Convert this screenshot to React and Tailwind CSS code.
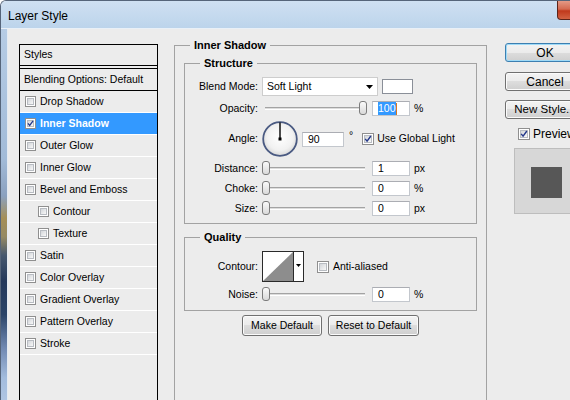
import React from "react";

function Checkbox({ checked = false, small = false }) {
  return (
    <span
      className={`${small ? "w-[11px] h-[11px]" : "w-[12px] h-[12px]"} relative shrink-0 flex border border-[#8f8f8f] bg-white p-px`}
    >
      <span className="flex-1 border border-[#b8bcc2] bg-gradient-to-br from-[#d3d6da] to-[#f8f8f8]" />
      {checked && (
        <svg className="absolute inset-0 w-full h-full" viewBox="0 0 12 12">
          <path d="M2.6 5.8 L4.9 8.6 L9.4 2.4" fill="none" stroke="#24388a" strokeWidth="1.7" />
        </svg>
      )}
    </span>
  );
}

function Slider({ at = "left" }) {
  return (
    <div className="relative w-[105px] h-[15px] shrink-0 flex items-center">
      <div className="ml-[3px] w-[100px] h-[3px] border-t border-[#a3a3a3] border-b border-b-white bg-[#dcdcdc]" />
      <div
        className={`${at === "left" ? "left-0" : "right-0"} absolute top-0 w-[8px] h-[14px] rounded-[3px] border border-[#7c7c7c] bg-gradient-to-b from-[#fafafa] to-[#d9d9d9]`}
      />
    </div>
  );
}

function Field({ value, wide = false, selected = false }) {
  return (
    <div
      className={`${wide ? "w-[42px]" : "w-[38px]"} h-[15px] shrink-0 flex items-center bg-white border border-[#c3c7cd] border-t-[#abadb3] pl-[5px]`}
    >
      {selected ? (
        <>
          <span className="bg-[#3399ff] text-white leading-[13px]">{value}</span>
          <span className="w-px h-[12px] bg-[#d9791f]" />
        </>
      ) : (
        <span className="leading-[13px]">{value}</span>
      )}
    </div>
  );
}

function Row({ label, className = "", children }) {
  return (
    <div className={`flex items-center ${className}`}>
      <span className="w-[73px] shrink-0 text-right">{label}</span>
      <div className="ml-[4px] flex items-center">{children}</div>
    </div>
  );
}

function Button({ children, className = "", main = false }) {
  return (
    <div
      className={`flex items-center justify-center shrink-0 whitespace-nowrap rounded-[3px] border bg-[linear-gradient(to_bottom,#f3f3f3_0%,#ebebeb_50%,#dddddd_50%,#cfcfcf_100%)] ${
        main
          ? "border-[#3c7fb1] shadow-[inset_0_0_0_1px_#9fdaf7]"
          : "border-[#707070] shadow-[inset_0_0_0_1px_#fbfbfb]"
      } ${className}`}
    >
      {children}
    </div>
  );
}

const effects = [
  { name: "Drop Shadow" },
  { name: "Inner Shadow", checked: true, active: true },
  { name: "Outer Glow" },
  { name: "Inner Glow" },
  { name: "Bevel and Emboss" },
  { name: "Contour", sub: true },
  { name: "Texture", sub: true },
  { name: "Satin" },
  { name: "Color Overlay" },
  { name: "Gradient Overlay" },
  { name: "Pattern Overlay" },
  { name: "Stroke" },
];

export default function App() {
  return (
    <div className="w-[570px] h-[400px] overflow-hidden flex flex-col font-['Liberation_Sans',Arial,sans-serif] text-[10.5px] text-black rounded-tl-[6px] border-t border-l border-[#56657a] bg-[#ececec]">
      {/* Title bar */}
      <div className="h-[28px] shrink-0 flex items-start bg-gradient-to-b from-[#cfe0f2] to-[#bcd4eb] border-b border-[#e9f0f7]">
        <span className="pl-[7px] pt-[7px] text-[12px] leading-[16px]">Layer Style</span>
        <div className="ml-auto mr-[-31px] w-[44px] h-[19px] shrink-0 rounded-bl-[4px] border border-t-0 border-[#5c2419] bg-[linear-gradient(to_bottom,#e49a86_0%,#d46a50_45%,#c0391c_55%,#d26242_100%)]" />
      </div>

      <div className="flex-1 flex min-h-0">
        {/* glass frame */}
        <div className="w-[7px] shrink-0 border-r border-[#e4ebf3] bg-[linear-gradient(to_bottom,#b6cce5_0%,#a2bbd8_35%,#8ba1bf_45%,#a58f57_51%,#958a64_56%,#46586f_61%,#24385a_68%,#2b4468_77%,#7189b2_86%,#a3bcdd_94%,#afc5e2_100%)]" />

        {/* client area */}
        <div className="flex-1 flex items-start pl-[11px] bg-[#ececec]">
          {/* Styles list */}
          <div className="w-[139px] h-[400px] shrink-0 mt-[15px] border border-black flex flex-col">
            <div className="h-[21px] pl-[4px] flex items-center border-b border-black">Styles</div>
            <div className="h-[2px]" />
            <div className="h-[23px] pl-[4px] flex items-center border-t border-b border-black">
              Blending Options: Default
            </div>
            {effects.map((e) => (
              <div
                key={e.name}
                className={`h-[22px] flex items-center gap-[3px] border-b border-white ${e.sub ? "pl-[18px]" : "pl-[5px]"} ${
                  e.active ? "bg-[#3399ff] text-white font-bold" : ""
                }`}
              >
                <Checkbox small checked={e.checked} />
                <span className="ml-px">{e.name}</span>
              </div>
            ))}
          </div>

          {/* Inner Shadow group */}
          <fieldset className="w-[313px] h-[400px] shrink-0 ml-[16px] mt-[10px] border border-[#a2a2a2]">
            <legend className="ml-[15px] px-[4px] text-[11px] leading-[13px] font-bold">Inner Shadow</legend>

            <fieldset className="mx-[9px] mt-[5px] border border-[#a2a2a2] pb-[7px]">
              <legend className="ml-[15px] px-[4px] text-[11px] leading-[13px] font-bold">Structure</legend>

              <Row label="Blend Mode:" className="mt-[7px] h-[19px]">
                <div className="relative w-[116px] h-[19px] flex items-center pl-[4px] bg-white border border-[#cdcdcd]">
                  Soft Light
                  <svg className="absolute right-[4px] top-[7px]" width="7" height="4" viewBox="0 0 7 4">
                    <path d="M0 0 H7 L3.5 4 Z" fill="#000" />
                  </svg>
                </div>
                <div className="ml-[4px] w-[31px] h-[15px] bg-white border border-[#8a8f98]" />
              </Row>

              <Row label="Opacity:" className="mt-[5px] h-[15px]">
                <Slider at="right" />
                <div className="ml-[5px]">
                  <Field value="100" selected />
                </div>
                <span className="ml-[4px]">%</span>
              </Row>

              <Row label="Angle:" className="mt-[5px] h-[36px]">
                <svg width="36" height="36" viewBox="0 0 36 36" className="shrink-0">
                  <defs>
                    <radialGradient id="dial" cx="50%" cy="45%" r="55%">
                      <stop offset="0%" stopColor="#ffffff" />
                      <stop offset="70%" stopColor="#f1f1f1" />
                      <stop offset="100%" stopColor="#d8d8d8" />
                    </radialGradient>
                  </defs>
                  <circle cx="18" cy="18" r="16.8" fill="url(#dial)" stroke="#4a5a82" strokeWidth="1.8" />
                  <line x1="18" y1="1.5" x2="18" y2="18" stroke="#000" strokeWidth="1.4" />
                  <rect x="16.5" y="16.5" width="3" height="3" fill="#000" />
                </svg>
                <div className="ml-[4px]">
                  <Field value="90" wide />
                </div>
                <span className="ml-[5px] self-start mt-[10px] leading-[8px]">°</span>
                <div className="ml-[9px]">
                  <Checkbox checked />
                </div>
                <span className="ml-[3px]">Use Global Light</span>
              </Row>

              <Row label="Distance:" className="mt-[4px] h-[15px]">
                <Slider />
                <div className="ml-[5px]">
                  <Field value="1" />
                </div>
                <span className="ml-[4px]">px</span>
              </Row>
              <Row label="Choke:" className="mt-[5px] h-[15px]">
                <Slider />
                <div className="ml-[5px]">
                  <Field value="0" />
                </div>
                <span className="ml-[4px]">%</span>
              </Row>
              <Row label="Size:" className="mt-[5px] h-[15px]">
                <Slider />
                <div className="ml-[5px]">
                  <Field value="0" />
                </div>
                <span className="ml-[4px]">px</span>
              </Row>
            </fieldset>

            <fieldset className="mx-[9px] mt-[7px] border border-[#a2a2a2] pb-[8px]">
              <legend className="ml-[15px] px-[4px] text-[11px] leading-[13px] font-bold">Quality</legend>

              <Row label="Contour:" className="mt-[7px] h-[31px]">
                <svg width="42" height="31" viewBox="0 0 42 31" className="shrink-0">
                  <rect x="0.5" y="0.5" width="41" height="30" fill="#fff" stroke="#2a2a2a" />
                  <polygon points="1,30 31,1 31,30" fill="#8d8d8d" />
                  <line x1="31.5" y1="0.5" x2="31.5" y2="30.5" stroke="#2a2a2a" />
                  <path d="M34 13 H39 L36.5 16 Z" fill="#000" />
                </svg>
                <div className="ml-[13px]">
                  <Checkbox />
                </div>
                <span className="ml-[4px]">Anti-aliased</span>
              </Row>

              <Row label="Noise:" className="mt-[5px] h-[15px]">
                <Slider />
                <div className="ml-[5px]">
                  <Field value="0" />
                </div>
                <span className="ml-[4px]">%</span>
              </Row>
            </fieldset>

            <div className="flex mt-[4px] ml-[67px]">
              <Button className="w-[80px] h-[21px]">Make Default</Button>
              <Button className="w-[91px] h-[21px] ml-[6px]">Reset to Default</Button>
            </div>
          </fieldset>

          {/* Right column */}
          <div className="w-[80px] shrink-0 ml-[18px] mt-[14px] flex flex-col text-[12px]">
            <Button main className="h-[19px]">OK</Button>
            <Button className="h-[19px] mt-[10px]">Cancel</Button>
            <Button className="h-[19px] mt-[9px] text-[11.5px]">New Style...</Button>
            <div className="flex items-center mt-[8px] ml-[13px] h-[13px]">
              <Checkbox checked />
              <span className="ml-[3px]">Preview</span>
            </div>
            <div className="mt-[8px] ml-[9px] w-[70px] h-[66px] shrink-0 border border-[#bdbdbd] bg-[#d7d7d7] pl-[16px] pt-[18px]">
              <div className="w-[31px] h-[31px] bg-[#575757]" />
            </div>
          </div>
        </div>
      </div>
    </div>
  );
}
